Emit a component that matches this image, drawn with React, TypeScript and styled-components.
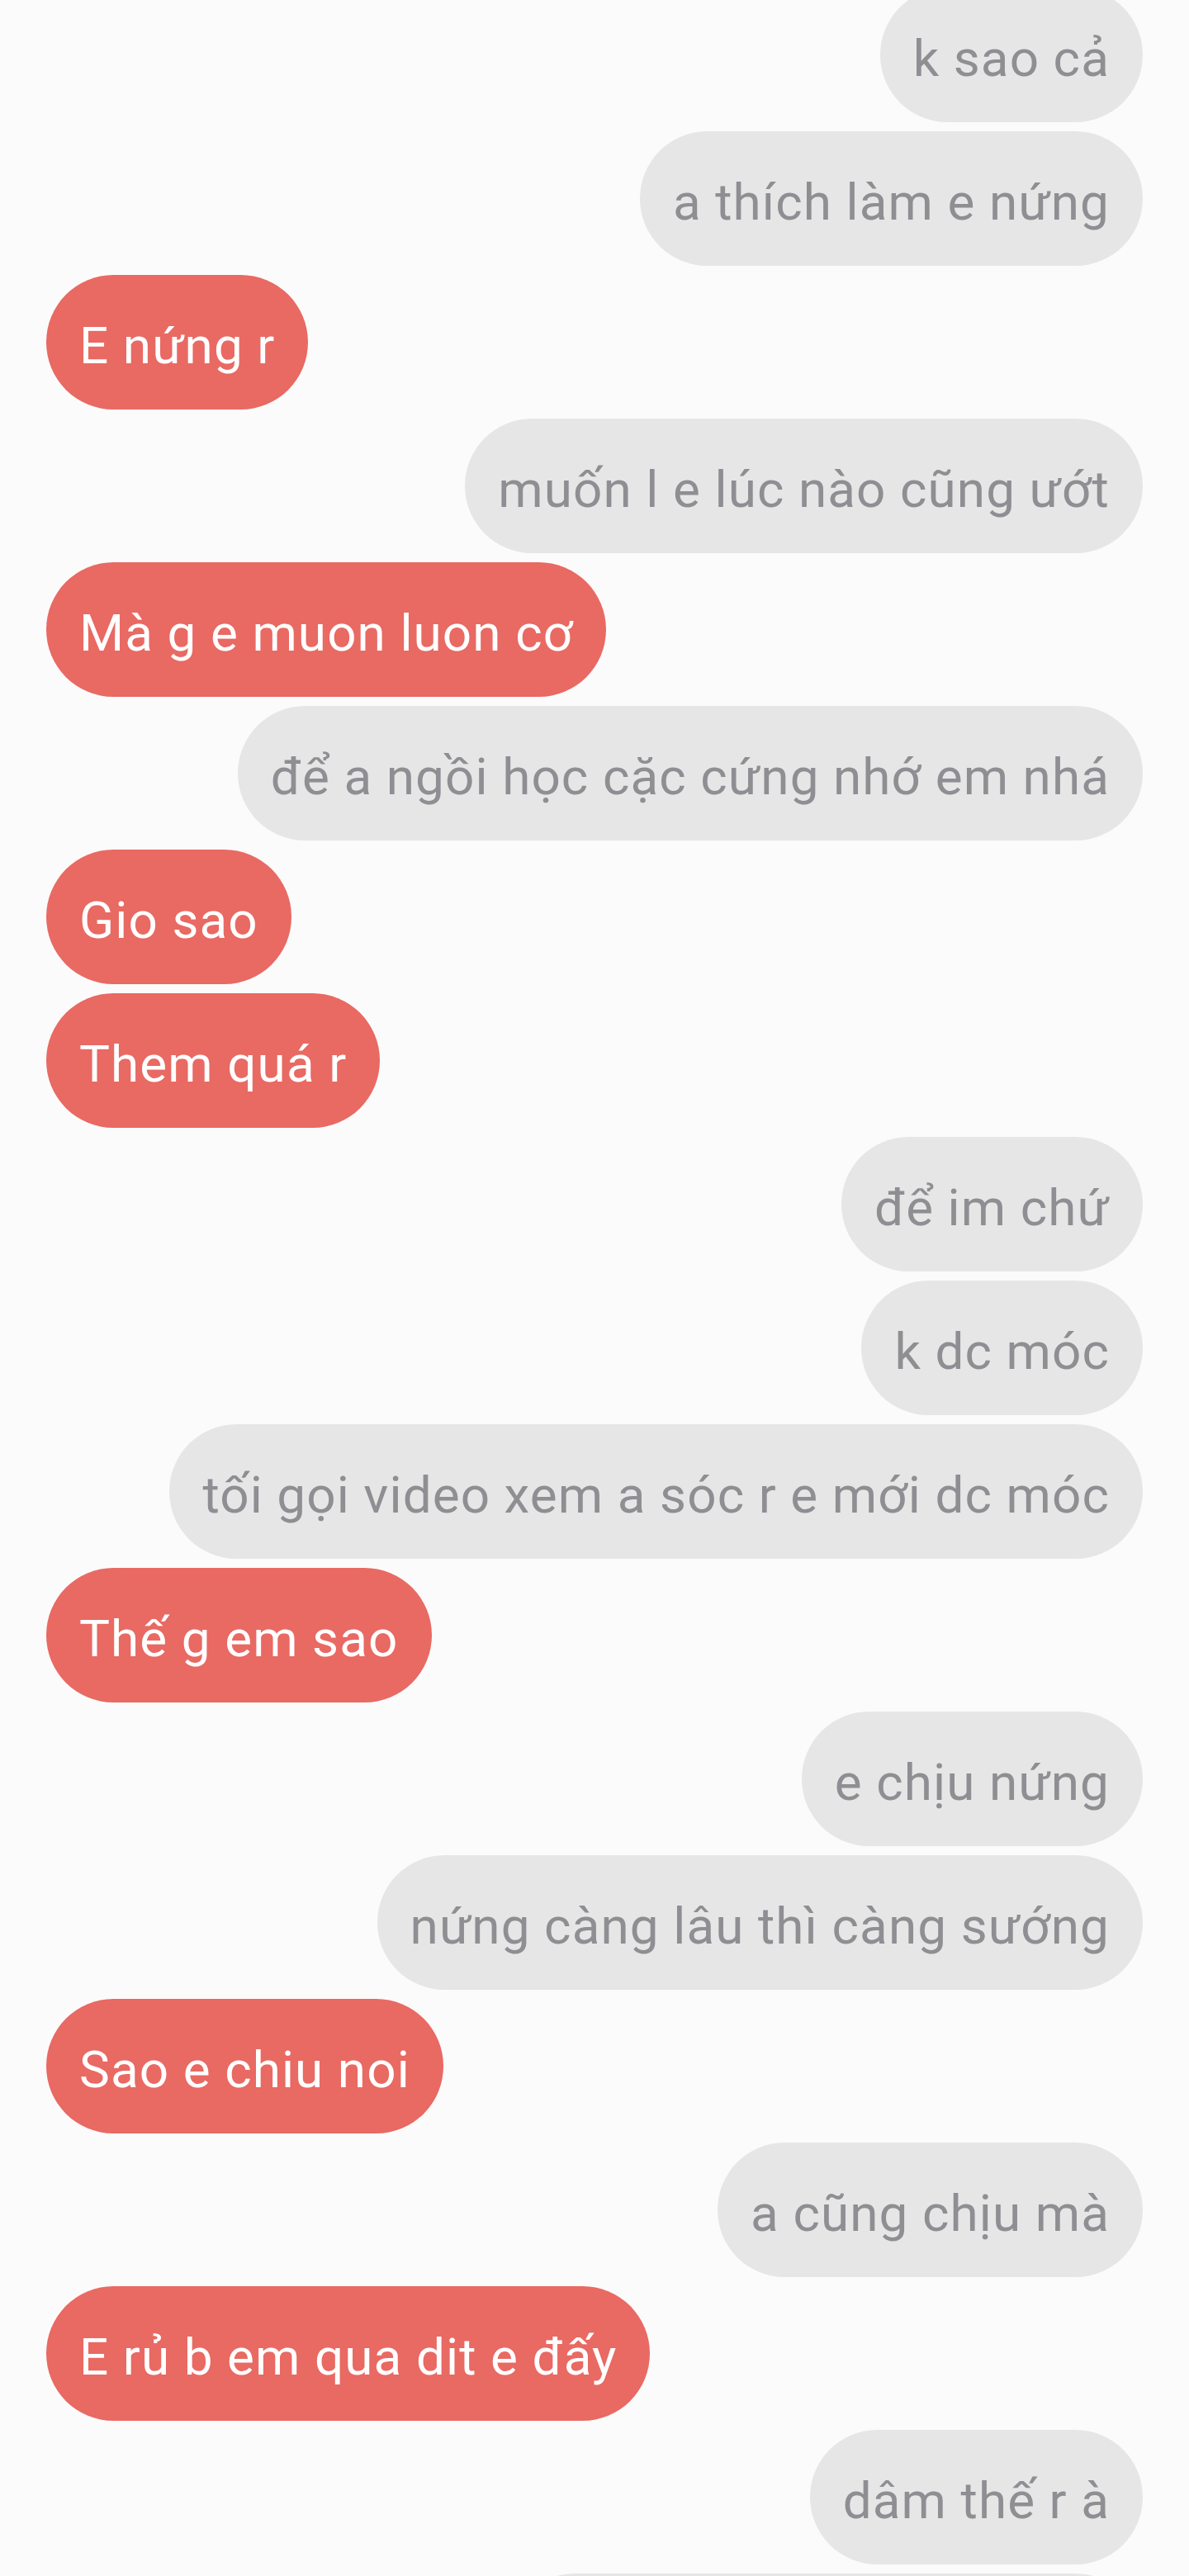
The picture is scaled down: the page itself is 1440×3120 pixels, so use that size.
import React from "react";
import styled, { createGlobalStyle } from "styled-components";

const GlobalStyle = createGlobalStyle`
  html, body {
    margin: 0;
    padding: 0;
    background: #fbfbfb;
  }
  body {
    font-family: Roboto, "Noto Sans", "Liberation Sans", sans-serif;
  }
`;

const Screen = styled.div`
  width: 1440px;
  height: 3120px;
  overflow: hidden;
  background: #fbfbfb;
`;

const Thread = styled.div`
  display: flex;
  flex-direction: column;
  gap: 11px;
  padding: 0 56px;
  margin-top: -15px;
`;

const Row = styled.div<{ $mine: boolean }>`
  display: flex;
  justify-content: ${(p) => (p.$mine ? "flex-start" : "flex-end")};
`;

const Bubble = styled.div<{ $mine: boolean }>`
  box-sizing: border-box;
  height: 163px;
  display: flex;
  align-items: center;
  padding: 7px 40px 0;
  border-radius: 82px;
  background: ${(p) => (p.$mine ? "#e96963" : "#e6e6e6")};
  color: ${(p) => (p.$mine ? "#ffffff" : "#8e8e93")};
  font-size: 62px;
  letter-spacing: 1.1px;
  white-space: nowrap;
`;

type Msg = { text: string; mine: boolean };

const messages: Msg[] = [
  { text: "k sao cả", mine: false },
  { text: "a thích làm e nứng", mine: false },
  { text: "E nứng r", mine: true },
  { text: "muốn l e lúc nào cũng ướt", mine: false },
  { text: "Mà g e muon luon cơ", mine: true },
  { text: "để a ngồi học cặc cứng nhớ em nhá", mine: false },
  { text: "Gio sao", mine: true },
  { text: "Them quá r", mine: true },
  { text: "để im chứ", mine: false },
  { text: "k dc móc", mine: false },
  { text: "tối gọi video xem a sóc r e mới dc móc", mine: false },
  { text: "Thế g em sao", mine: true },
  { text: "e chịu nứng", mine: false },
  { text: "nứng càng lâu thì càng sướng", mine: false },
  { text: "Sao e chiu noi", mine: true },
  { text: "a cũng chịu mà", mine: false },
  { text: "E rủ b em qua dit e đấy", mine: true },
  { text: "dâm thế r à", mine: false },
  { text: "thì a cũng muốn gặp em", mine: false },
];

export default function App() {
  return (
    <>
      <GlobalStyle />
      <Screen>
        <Thread>
          {messages.map((m, i) => (
            <Row key={i} $mine={m.mine}>
              <Bubble $mine={m.mine}>{m.text}</Bubble>
            </Row>
          ))}
        </Thread>
      </Screen>
    </>
  );
}
